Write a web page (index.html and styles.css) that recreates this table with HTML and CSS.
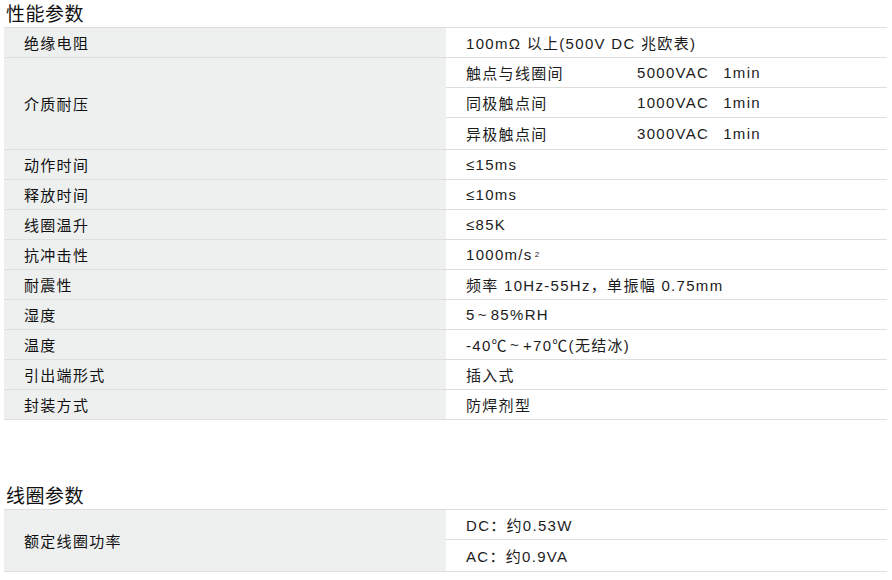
FILE: index.html
```html
<!DOCTYPE html>
<html lang="zh-CN">
<head>
<meta charset="utf-8">
<title>性能参数</title>
<link rel="stylesheet" href="styles.css">
</head>
<body>
<section class="block">
  <h2 class="title">性能参数</h2>
  <div class="table">
    <div class="row"><div class="label">绝缘电阻</div><div class="value">100mΩ 以上(500V DC 兆欧表)</div></div>
    <div class="row">
      <div class="label">介质耐压</div>
      <div class="value multi">
        <div class="sub"><span class="k">触点与线圈间</span><span>5000VAC<span class="unit">1min</span></span></div>
        <div class="sub"><span class="k">同极触点间</span><span>1000VAC<span class="unit">1min</span></span></div>
        <div class="sub last"><span class="k">异极触点间</span><span>3000VAC<span class="unit">1min</span></span></div>
      </div>
    </div>
    <div class="row"><div class="label">动作时间</div><div class="value">≤15ms</div></div>
    <div class="row"><div class="label">释放时间</div><div class="value">≤10ms</div></div>
    <div class="row"><div class="label">线圈温升</div><div class="value">≤85K</div></div>
    <div class="row"><div class="label">抗冲击性</div><div class="value">1000m/s<sup>2</sup></div></div>
    <div class="row"><div class="label">耐震性</div><div class="value">频率 10Hz-55Hz，单振幅 0.75mm</div></div>
    <div class="row"><div class="label">湿度</div><div class="value">5<span class="tilde">~</span>85%RH</div></div>
    <div class="row"><div class="label">温度</div><div class="value">-40℃<span class="tilde">~</span>+70℃(无结冰)</div></div>
    <div class="row"><div class="label">引出端形式</div><div class="value">插入式</div></div>
    <div class="row"><div class="label">封装方式</div><div class="value">防焊剂型</div></div>
  </div>
</section>
<section class="block second">
  <h2 class="title">线圈参数</h2>
  <div class="table">
    <div class="row">
      <div class="label">额定线圈功率</div>
      <div class="value multi">
        <div class="sub single">DC：约0.53W</div>
        <div class="sub single last">AC：约0.9VA</div>
      </div>
    </div>
  </div>
</section>
</body>
</html>
```
FILE: styles.css
```css
* { box-sizing: border-box; }
html, body { background: #ffffff; }
body {
  margin: 0;
  padding: 0 5px 0 4px;
  font-family: "Liberation Sans", "Noto Sans CJK SC", sans-serif;
  color: #1c1c1c;
}
.block { display: flex; flex-direction: column; }
.second { margin-top: 62px; }
.title {
  margin: 0;
  height: 27px;
  padding: 0 0 0 2px;
  font-size: 19px;
  line-height: 25px;
  font-weight: 400;
  letter-spacing: 0.5px;
  color: #111111;
  font-family: "Noto Sans CJK SC", sans-serif;
}
.table {
  border-top: 1px solid #dedede;
}
.row {
  display: grid;
  grid-template-columns: 442px 1fr;
  border-bottom: 1px solid #dedede;
}
.label, .value {
  font-size: 15px;
  letter-spacing: 1.3px;
  min-height: 29px;
  display: flex;
  align-items: center;
  padding-left: 20px;
}
.label {
  background: #eef0f0;
  font-weight: 400;
  color: #111111;
}
.value {
  background: #ffffff;
  color: #1c1c1c;
}
.value.multi {
  flex-direction: column;
  align-items: stretch;
  padding-left: 0;
}
.sub {
  display: grid;
  grid-template-columns: 171px auto;
  align-items: center;
  height: 30px;
  padding-left: 20px;
  border-bottom: 1px solid #dedede;
}
.sub.single { display: flex; }
.sub.last { border-bottom: none; height: 31px; }
.unit { margin-left: 14px; }
.tilde { margin: 0 3px 0 2px; }
sup {
  font-size: 8px;
  line-height: 0;
  vertical-align: 6px;
  margin-left: 2px;
}
```
